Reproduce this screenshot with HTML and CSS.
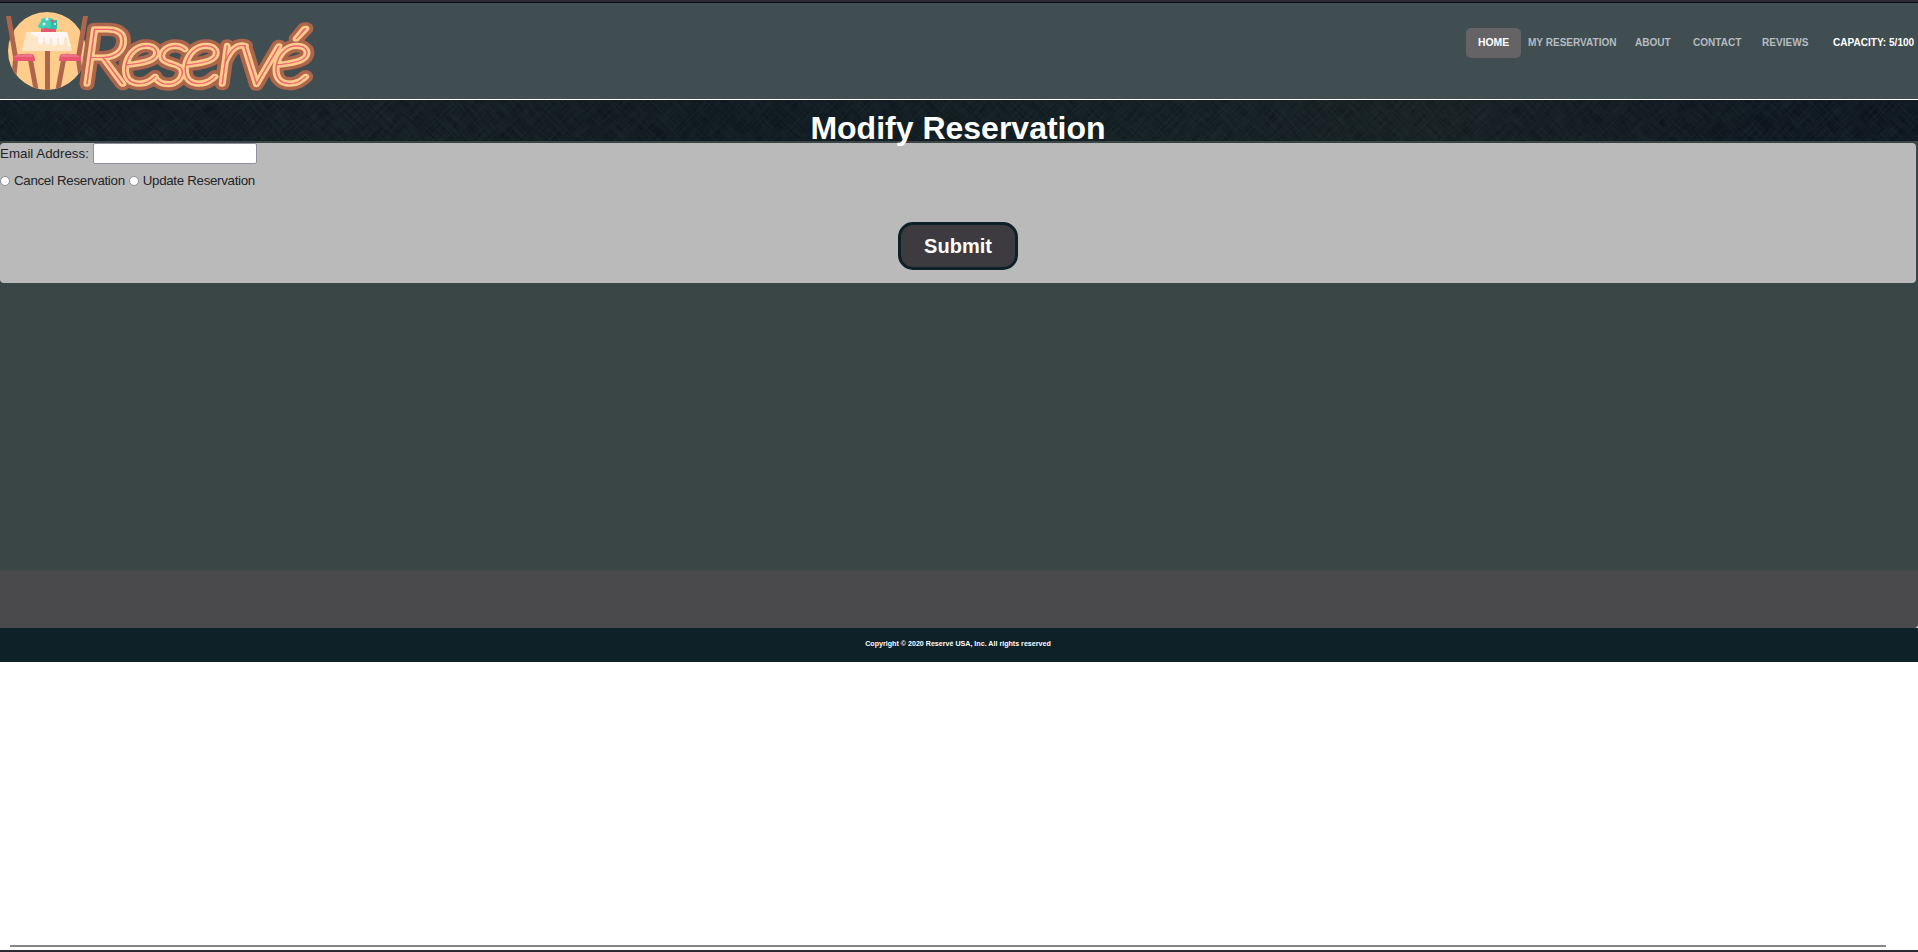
FILE: index.html
```html
<!DOCTYPE html>
<html lang="en">
<head>
<meta charset="utf-8">
<title>Modify Reservation</title>
<link rel="stylesheet" href="styles.css">
</head>
<body>
<header class="header">
  <svg class="logo" width="330" height="96" viewBox="0 3 330 96" role="img" aria-label="Reservé">
    <defs><clipPath id="disc"><circle cx="47" cy="51" r="39"/></clipPath></defs>
    <circle cx="47" cy="51" r="39" fill="#ffcc8c"/>
    <g clip-path="url(#disc)" fill="#ad654c">
      <path d="M45 50h5v42h-5zM28 60h5l6 32h-5zM61 60h5l-6 32h-5zM13 60h5l-2 20h-5zM76 60h5l3 20h-5z"/>
    </g>
    <path d="M6 16h5l7 41h-5zM83 16h5l-7 41h-5z" fill="#ad654c"/>
    <path d="M26 32h41l5 19H22z" fill="#fce6c5"/>
    <path d="M31 32h36l4 15q-4 0-4-8-1-4-3 0v4q-3 5-5 0v-4q-1-2-2 0v5q-3 4-5 0v-5q-1-2-2 0v3q-3 5-5 0v-4q-1-2-2 0v4q-3 5-5 0v-5q-7-2-7-5z" fill="#fff5f4"/>
    <path d="M41 27h15v5H41z" fill="#e8566f"/>
    <path d="M38 27q0-3 3-5-1-4 4-4 7-1 10 3 5 4 0 8-4-2-6 0-4-3-6 0-4-1-5-2z" fill="#39d3bb"/>
    <path d="M52 20h5v9h-7z" fill="#2fbeae"/>
    <circle cx="47" cy="19" r="1.5" fill="#fce6dd"/><circle cx="44" cy="24" r="1.5" fill="#fce6dd"/><circle cx="55" cy="24" r="1" fill="#fce6dd"/><circle cx="52" cy="21" r="1.5" fill="#e8566f"/>
    <path d="M13 56q8-3 19-2 3 1 3 7H13zM59 61q0-6 3-7 11-1 19 2v5z" fill="#e8566f"/>
    <path d="M15 56q8-3 17-2l1 3H15zM61 57l1-3q11-1 17 2v1z" fill="#ed7487"/>
    <g class="wordmark" transform="scale(1.12 1)">
      <text class="tube-outer" x="71.5 108 138.5 161.5 194 214 242.5" y="84.5">Reservé</text>
      <text class="tube-glow" x="71.5 108 138.5 161.5 194 214 242.5" y="84.5">Reservé</text>
      <text class="tube-core" x="71.5 108 138.5 161.5 194 214 242.5" y="84.5">Reservé</text>
    </g>
  </svg>
  <nav class="nav">
    <a class="nav-item home">HOME</a>
    <a class="nav-item reservation">MY RESERVATION</a>
    <a class="nav-item about">ABOUT</a>
    <a class="nav-item contact">CONTACT</a>
    <a class="nav-item reviews">REVIEWS</a>
    <span class="nav-item capacity">CAPACITY: 5/100</span>
  </nav>
</header>
<section class="hero">
  <svg class="weave" width="100%" height="100%" aria-hidden="true">
    <defs>
      <filter id="cloth" x="0" y="0" width="100%" height="100%">
        <feTurbulence type="fractalNoise" baseFrequency=".04 .5" numOctaves="2" seed="4"/>
        <feColorMatrix values="0 0 0 0 .13  0 0 0 0 .18  0 0 0 0 .18  1.3 0 0 0 -.4"/>
      </filter>
    </defs>
    <rect x="-1500" y="-1500" width="4500" height="3000" transform="rotate(45)" filter="url(#cloth)"/>
    <rect x="-500" y="-1500" width="3000" height="3000" transform="rotate(-45)" filter="url(#cloth)"/>
  </svg>
  <h1 class="title">Modify Reservation</h1>
</section>
<main class="main">
  <form class="panel">
    <div class="email-row"><label for="email">Email Address:</label><input class="email" id="email" type="text"></div>
    <div class="choices">
      <label class="choice"><input class="radio" type="radio" name="action">Cancel Reservation</label>
      <label class="choice"><input class="radio" type="radio" name="action">Update Reservation</label>
    </div>
    <button class="submit" type="button">Submit</button>
  </form>
</main>
<div class="band-wrap"><div class="band"></div></div>
<footer class="footer">Copyright © 2020 Reservé USA, Inc. All rights reserved</footer>
<div class="blank"><div class="rule"></div></div>
</body>
</html>
```
FILE: styles.css
```css
* { box-sizing: border-box; }
body {
  margin: 0;
  height: 952px;
  overflow: hidden;
  display: flex;
  flex-direction: column;
  border-top: 2px solid #2b2a33;
  border-bottom: 2px solid #2b2a33;
  background: #fff;
  font-family: "Liberation Sans", Arial, sans-serif;
  color: #212529;
}
.header {
  height: 98px;
  flex: none;
  display: flex;
  justify-content: space-between;
  align-items: flex-start;
  border-top: 1px solid #0c0c0d;
  border-bottom: 1px solid #fff;
  background: #404d51;
}
.logo { display: block; overflow: visible; }
.wordmark {
  font-family: Lato, sans-serif;
  font-size: 79px;
  font-style: italic;
  font-weight: 100;
  stroke-linejoin: round;
}
.tube-outer { fill: #ad654c; stroke: #ad654c; stroke-width: 12.5px; }
.tube-glow { fill: #ffcc8c; stroke: #ffcc8c; stroke-width: 5.4px; }
.tube-core { fill: #ee5c70; stroke: #ee5c70; stroke-width: .35px; }
.nav {
  display: flex;
  padding: 25px 4px 0 0;
  font-size: 10.05px;
  font-weight: 700;
  line-height: 30px;
  color: #b6bcc1;
  white-space: nowrap;
}
.nav-item { display: block; }
.home {
  width: 55px;
  height: 30px;
  border-radius: 5px;
  background: #656366;
  color: #fff;
  text-align: center;
  font-size: 10.4px;
}
.reservation { width: 107px; margin-left: 7px; }
.about { width: 58px; }
.contact { width: 69px; }
.reviews { width: 71px; }
.capacity { width: 81px; color: #fff; }
.hero {
  height: 41px;
  flex: none;
  display: grid;
  position: relative;
  z-index: 1;
  background: linear-gradient(90deg, #0b151c, #101a1d 18%, #0b151c 38%, #0e191e 55%, #121c1e 74%, #0a131c 92%);
}
.weave { grid-area: 1 / 1; width: 100%; height: 41px; opacity: .18; }
.title {
  grid-area: 1 / 1;
  z-index: 1;
  margin: 0;
  padding-top: 10px;
  padding-right: 2px;
  text-align: center;
  color: #fff;
  font-size: 32px;
  line-height: 37px;
  white-space: nowrap;
}
.main { height: 429px; flex: none; padding: 2px 2px 0 0; background: #3a4545; }
.panel {
  height: 140px;
  border-radius: 4px;
  background: #bababa;
  font-size: 13.33px;
  display: flex;
  flex-direction: column;
}
.email-row { display: flex; height: 21px; line-height: 22px; }
.email-row label { width: 93px; }
.email { width: 164px; height: 21px; border: 1px solid #8f8f9d; border-radius: 2px; background: #fff; padding: 0; }
.choices { display: flex; gap: 4px; height: 20px; margin-top: 7px; line-height: 20px; letter-spacing: -.31px; }
.choice { display: flex; align-items: center; white-space: nowrap; }
.radio { appearance: none; width: 10px; height: 10px; margin: 0 4px 0 0; border: 1px solid #8f8f9d; border-radius: 50%; background: #fff; }
.submit {
  align-self: center;
  width: 120px;
  height: 48px;
  margin-top: 31px;
  padding: 0;
  border: 3px solid #0e2128;
  border-radius: 15px;
  background: #3d3b40;
  color: #fff;
  font: 700 20px "Liberation Sans", Arial, sans-serif;
}
.band-wrap { height: 58px; flex: none; background: #ddd; }
.band { height: 58px; border-radius: 0 0 4px 0; background: #4a494b; }
.footer {
  height: 34px;
  flex: none;
  padding-right: 2px;
  background: #0e2128;
  color: #fff;
  text-align: center;
  font-size: 7.12px;
  font-weight: 700;
  line-height: 33px;
}
.blank { flex: 1; display: flex; align-items: flex-end; padding: 0 32px 3px 10px; background: #fff; }
.rule { width: 100%; height: 2px; background: #858585; }
```
